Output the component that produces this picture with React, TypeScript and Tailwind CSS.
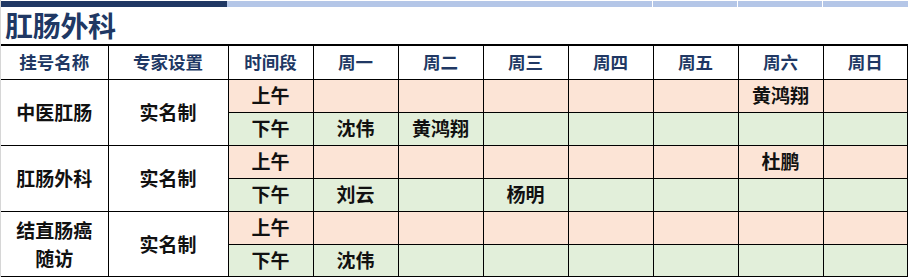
import React from 'react';

// 排班数据：每个科室上午/下午，周一到周日
interface Fila {
  nombre: string[];
  experto: string;
  am: string[];
  pm: string[];
}

const dias = ['周一', '周二', '周三', '周四', '周五', '周六', '周日'];

const filas: Fila[] = [
  { nombre: ['中医肛肠'], experto: '实名制', am: ['', '', '', '', '', '黄鸿翔', ''], pm: ['沈伟', '黄鸿翔', '', '', '', '', ''] },
  { nombre: ['肛肠外科'], experto: '实名制', am: ['', '', '', '', '', '杜鹏', ''], pm: ['刘云', '', '杨明', '', '', '', ''] },
  { nombre: ['结直肠癌', '随访'], experto: '实名制', am: ['', '', '', '', '', '', ''], pm: ['沈伟', '', '', '', '', '', ''] },
];

const cjk = "font-['Noto_Sans_CJK_SC','Noto_Sans',sans-serif]";

export default function App() {
  return (
    <div className={`w-[908px] h-[277px] bg-white border-l border-[#d6d6d6] overflow-hidden ${cjk}`}>
      {/* barra superior */}
      <div className="flex h-[6px] mt-px">
        <div className="w-[226px] bg-[#203864]" />
        <div className="flex flex-1 gap-px bg-white">
          <div className="w-[425px] bg-[#b4c6e7]" />
          <div className="w-[84px] bg-[#b4c6e7]" />
          <div className="w-[84px] bg-[#b4c6e7]" />
          <div className="flex-1 bg-[#b4c6e7]" />
        </div>
      </div>

      <div className="h-[37px] pl-[4px] text-[28px] font-bold leading-[37px] text-[#203864] tracking-[-0.3px]">肛肠外科</div>

      <table className="w-[906px] table-fixed border-collapse">
        <colgroup>
          <col className="w-[107px]" />
          <col className="w-[120px]" />
          <col className="w-[85px]" />
          {dias.map(d => <col key={d} className="w-[85px]" />)}
        </colgroup>
        <thead>
          <tr className="h-[34px] border-t-2 border-black text-[17.5px] font-bold text-[#203864]">
            <th className="border-r border-b border-black">挂号名称</th>
            <th className="border-r border-b border-black">专家设置</th>
            <th className="border-r border-b border-black">时间段</th>
            {dias.map((d, i) => (
              <th key={d} className={`border-b border-black ${i === 6 ? 'border-r-2' : 'border-r'}`}>{d}</th>
            ))}
          </tr>
        </thead>
        <tbody className="text-[19px] font-bold text-[#111]">
          {filas.map((f, idx) => (
            <React.Fragment key={idx}>
              <tr className="h-[33px]">
                <td rowSpan={2} className={`border-r border-black text-center leading-[28px] ${idx === 2 ? 'border-b-2' : 'border-b'}`}>
                  {f.nombre.map(n => <div key={n}>{n}</div>)}
                </td>
                <td rowSpan={2} className={`border-r border-black text-center ${idx === 2 ? 'border-b-2' : 'border-b'}`}>{f.experto}</td>
                <td className="border-r border-b border-black bg-[#fce4d6] text-center">上午</td>
                {f.am.map((c, i) => (
                  <td key={i} className={`border-b border-black bg-[#fce4d6] text-center ${i === 6 ? 'border-r-2' : 'border-r'}`}>{c}</td>
                ))}
              </tr>
              <tr className="h-[33px]">
                <td className={`border-r border-black bg-[#e2efda] text-center ${idx === 2 ? 'border-b-2' : 'border-b'}`}>下午</td>
                {f.pm.map((c, i) => (
                  <td key={i} className={`border-black bg-[#e2efda] text-center ${i === 6 ? 'border-r-2' : 'border-r'} ${idx === 2 ? 'border-b-2' : 'border-b'}`}>{c}</td>
                ))}
              </tr>
            </React.Fragment>
          ))}
        </tbody>
      </table>
    </div>
  );
}
